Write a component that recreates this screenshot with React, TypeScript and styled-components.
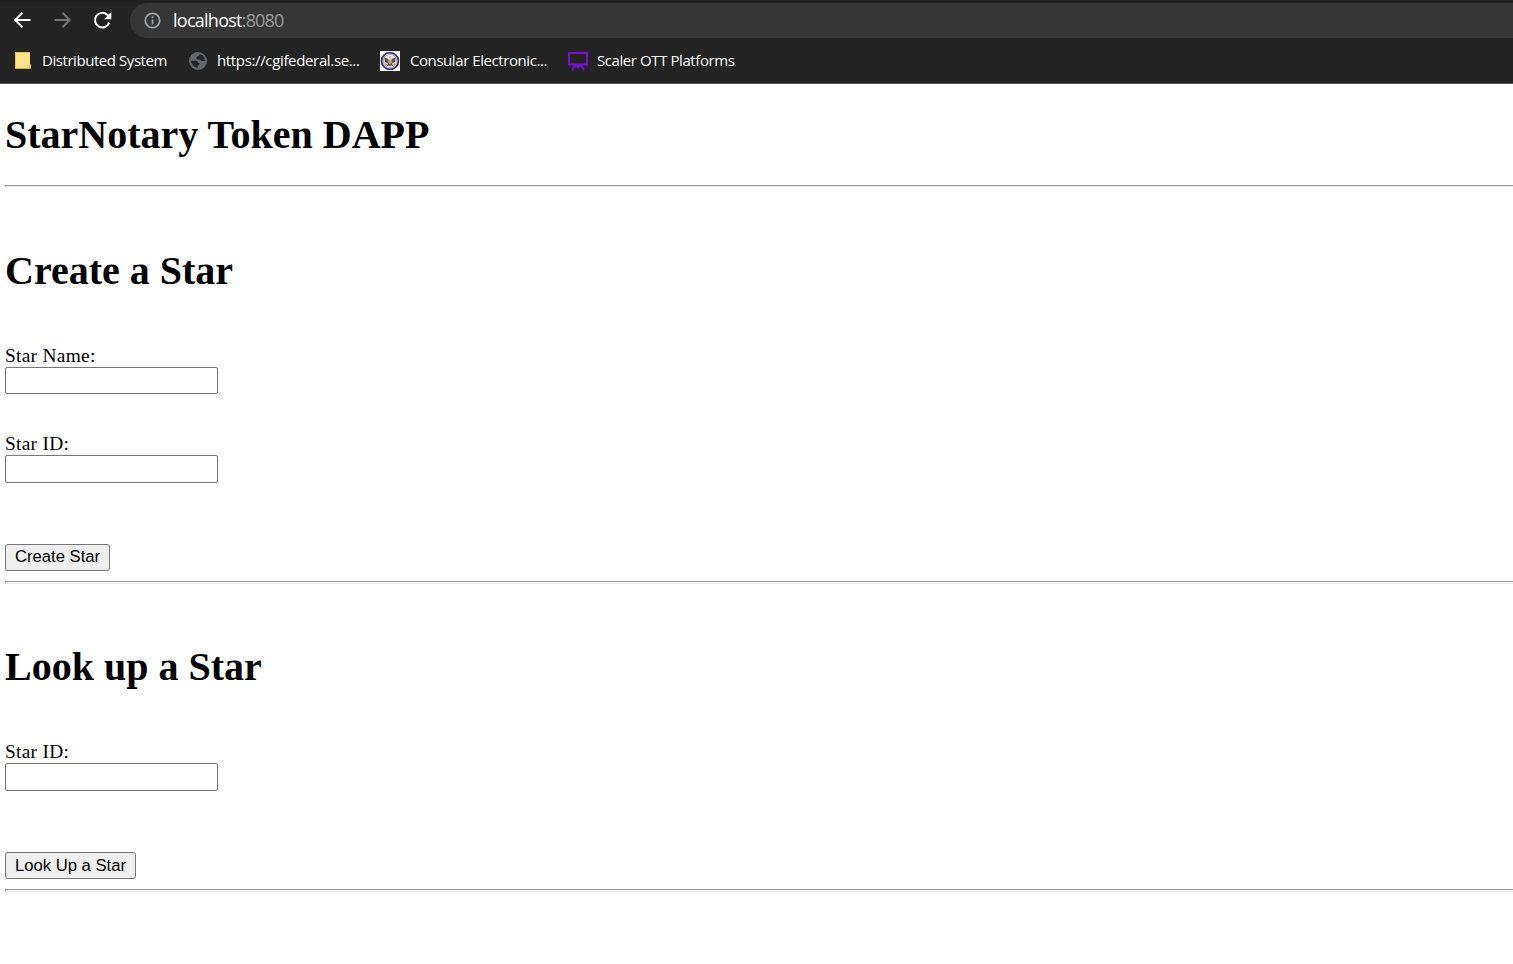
import React from 'react';
import styled, { createGlobalStyle } from 'styled-components';

const GlobalStyle = createGlobalStyle`
  * { box-sizing: border-box; }
  body { margin: 0; background: #fff; color: #000; overflow: hidden; }
`;

const Chrome = styled.header`
  height: 84px;
  background: #232323;
  border-top: 2px solid #1f1f1f;
  border-bottom: 1px solid #555;
  font-family: 'Open Sans', 'Noto Sans', sans-serif;
  color: #fff;
`;

const Toolbar = styled.div`
  height: 36px;
  display: flex;
  align-items: center;
  padding-left: 12px;
`;

const NavIcon = styled.svg`
  width: 20px;
  height: 20px;
  margin-right: 20px;
  flex: none;
`;

const AddressBar = styled.div`
  flex: 1;
  height: 35px;
  margin: 1px 0 0 -2px;
  padding-left: 14px;
  display: flex;
  align-items: center;
  background: #363636;
  border-radius: 18px 0 0 18px;
`;

const InfoIcon = styled.svg`
  width: 17px;
  height: 17px;
  margin-right: 12px;
`;

const Url = styled.span`
  padding-bottom: 2px;
  font-size: 18px;
  line-height: 24px;
  letter-spacing: -0.74px;
`;

const Port = styled.span`
  color: #9a9a9a;
  letter-spacing: -0.85px;
`;

const Bookmarks = styled.nav`
  height: 45px;
  display: flex;
  align-items: center;
  padding-left: 12px;
`;

const Bookmark = styled.div<{ $width: number }>`
  width: ${(p) => p.$width}px;
  display: flex;
  align-items: center;
  svg { flex: none; }
`;

const BookmarkText = styled.span<{ $spacing: number; $gap: number }>`
  margin-left: ${(p) => p.$gap}px;
  padding-bottom: 2px;
  font-size: 15px;
  line-height: 20px;
  white-space: nowrap;
  letter-spacing: ${(p) => p.$spacing}px;
`;

const Page = styled.main`
  padding-left: 5px;
  font-family: 'Liberation Serif', 'Times New Roman', serif;
  font-size: 19.4px;
`;

const Heading = styled.h1<{ $top: number }>`
  margin: 0;
  padding-top: ${(p) => p.$top}px;
  font-size: 40px;
  line-height: 46px;
  font-weight: bold;
`;

const Rule = styled.hr<{ $top: number; $height: number }>`
  height: ${(p) => p.$height}px;
  margin: ${(p) => p.$top}px 0 0;
  border: 1px solid;
  border-color: #9a9a9a #eee #eee #9a9a9a;
  border-right: 0;
`;

const Field = styled.label<{ $top: number }>`
  display: block;
  margin-top: ${(p) => p.$top}px;
  line-height: 22px;
  letter-spacing: 0.28px;
`;

const TextInput = styled.input<{ $height: number }>`
  display: block;
  width: 213px;
  height: ${(p) => p.$height}px;
  padding: 1px 3px;
  border: 1px solid #767676;
  border-radius: 2px;
  background: #fff;
  outline: 0;
`;

const Button = styled.button<{ $width: number; $top: number; $lift: number }>`
  display: block;
  width: ${(p) => p.$width}px;
  height: 27px;
  margin-top: ${(p) => p.$top}px;
  padding: 0 0 ${(p) => p.$lift}px;
  border: 1px solid #767676;
  border-radius: 3px;
  background: #efefef;
  color: #000;
  font: 16.67px/20px 'Liberation Sans', Arial, sans-serif;
  white-space: nowrap;
`;

const BackIcon = () => (
  <NavIcon viewBox="0 0 20 20" fill="none" stroke="#fff" strokeWidth="2">
    <path d="M18.5 10H3.5M10.5 2.8L3.3 10l7.2 7.2" />
  </NavIcon>
);

const ForwardIcon = () => (
  <NavIcon viewBox="0 0 20 20" fill="none" stroke="#757575" strokeWidth="2">
    <path d="M2.5 10h15M10.5 2.8l7.2 7.2-7.2 7.2" />
  </NavIcon>
);

const ReloadIcon = () => (
  <NavIcon viewBox="0 0 20 20">
    <path d="M17.2 12.6A7.3 7.3 0 1 1 15.4 4.9L17 6.7" fill="none" stroke="#fff" strokeWidth="2" />
    <path d="M19.3 2v7.2h-7.2z" fill="#fff" />
  </NavIcon>
);

const FolderIcon = () => (
  <svg width="20" height="20" viewBox="0 0 20 20">
    <path d="M3 1h15v12.5h1V18H3z" fill="#ffe38b" />
    <path d="M3 1h1v17H3zM3 1h15v1H3z" fill="#edc74d" />
    <path d="M15.5 18v-4.5h3V18z" fill="#f4cf57" />
    <path d="M3 17.5h16" stroke="#d9af36" />
  </svg>
);

const GlobeIcon = () => (
  <svg width="18" height="18" viewBox="0 0 18 18">
    <circle cx="9" cy="9" r="9" fill="#63676b" />
    <path
      d="M10.6 2.1c0 1.4-.6 2-1.8 2.2-1 .2-1.3.9-1.3 2 0 .9.6 1.3 1.6 1.3h1.5c.9 0 1.3.5 1.5 1.5h3.8A7 7 0 0 0 10.6 2.1zM2.1 8.8h4.4c1.6 0 2.5.8 2.5 2.1h1.6c0 1.6-.7 2.3-2 2.4v2.5A7 7 0 0 1 2.1 8.8z"
      fill="#242527"
    />
  </svg>
);

const SealIcon = () => (
  <svg width="20" height="20" viewBox="0 0 20 20">
    <path d="M0 0h20v20H0z" fill="#fff" />
    <circle cx="10" cy="10" r="8.4" fill="#e9e8ef" stroke="#393578" strokeWidth="1.9" />
    <circle cx="10" cy="10" r="6.6" fill="none" stroke="#a6a2ba" strokeWidth=".8" />
    <path d="M4.2 6.2l3.5 1.5L9 9.2h2l1.3-1.5 3.5-1.5-.6 4.4-3.2 2.2 1.4 2.4-2.4-.8-1 1-1-1-2.4.8L8 12.8l-3.2-2.2z" fill="#70533e" />
    <path d="M8.4 8.5h3.2v3.2L10 13.2l-1.6-1.5z" fill="#c7a7a0" />
    <path d="M9 5.3h2v2.3H9z" fill="#d7b86c" />
    <path d="M5 13.1l2 .6M15 13.1l-2 .6" stroke="#b89a4a" />
  </svg>
);

const BoardIcon = () => (
  <svg width="22" height="20" viewBox="0 0 22 20" fill="none" stroke="#7610cf">
    <path d="M1 2h18v11.6H1z" strokeWidth="2" />
    <path d="M7.2 13.8l-3.2 5.4M12.8 13.8l3.2 5.4M10 13.8v3.4M8.4 13.8l-1 2.8M11.6 13.8l1 2.8" strokeWidth="1.9" />
  </svg>
);

export default function App() {
  return (
    <>
      <GlobalStyle />
      <Chrome>
        <Toolbar>
          <BackIcon />
          <ForwardIcon />
          <ReloadIcon />
          <AddressBar>
            <InfoIcon viewBox="0 0 17 17" fill="none" stroke="#9aa0a6">
              <circle cx="8.5" cy="8.5" r="7.2" strokeWidth="1.8" />
              <path d="M8.5 7.5v5M8.5 4.3v1.9" strokeWidth="1.8" />
            </InfoIcon>
            <Url>localhost<Port>:8080</Port></Url>
          </AddressBar>
        </Toolbar>
        <Bookmarks>
          <Bookmark $width={177}>
            <FolderIcon />
            <BookmarkText $gap={10} $spacing={-0.44}>Distributed System</BookmarkText>
          </Bookmark>
          <Bookmark $width={191}>
            <GlobeIcon />
            <BookmarkText $gap={10} $spacing={-0.35}>https://cgifederal.se...</BookmarkText>
          </Bookmark>
          <Bookmark $width={188}>
            <SealIcon />
            <BookmarkText $gap={10} $spacing={-0.43}>Consular Electronic...</BookmarkText>
          </Bookmark>
          <Bookmark $width={180}>
            <BoardIcon />
            <BookmarkText $gap={7} $spacing={-0.42}>Scaler OTT Platforms</BookmarkText>
          </Bookmark>
        </Bookmarks>
      </Chrome>
      <Page>
        <Heading $top={28}>StarNotary Token DAPP</Heading>
        <Rule $top={27} $height={2} />

        <Heading $top={61}>Create a Star</Heading>
        <Field $top={51}>
          Star Name:
          <TextInput $height={27} />
        </Field>
        <Field $top={39}>
          Star ID:
          <TextInput $height={28} />
        </Field>
        <Button $top={61} $width={105} $lift={2}>Create Star</Button>
        <Rule $top={10} $height={3} />

        <Heading $top={60}>Look up a Star</Heading>
        <Field $top={51}>
          Star ID:
          <TextInput $height={28} />
        </Field>
        <Button $top={61} $width={131} $lift={0}>Look Up a Star</Button>
        <Rule $top={10} $height={3} />
      </Page>
    </>
  );
}
